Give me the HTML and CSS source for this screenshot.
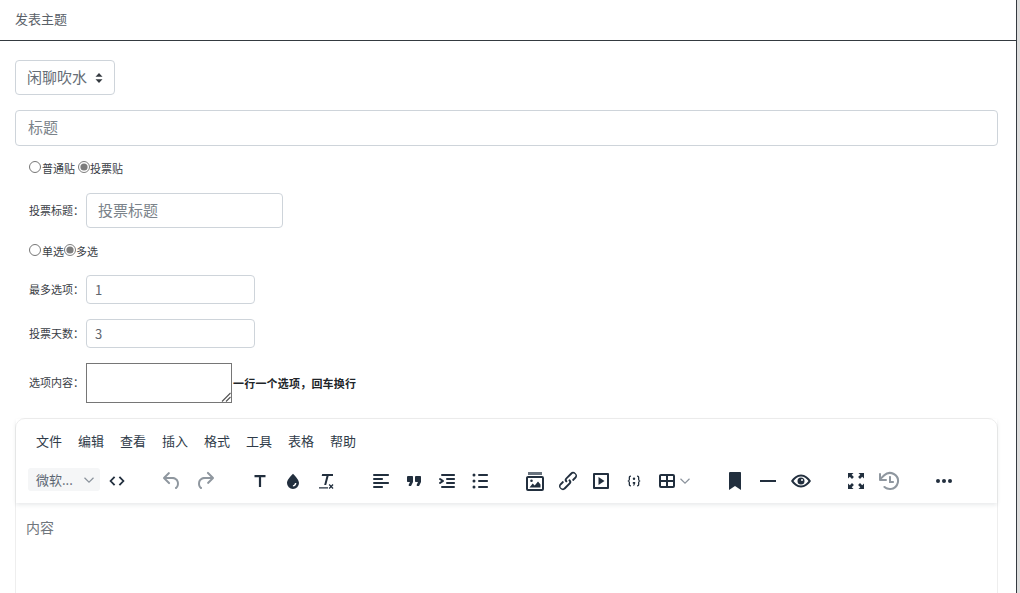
FILE: index.html
```html
<!DOCTYPE html>
<html>
<head>
  <title>发表主题</title>
  <meta charset="UTF-8">
  <link rel="stylesheet" href="styles.css">
</head>
<body>
  <div class="page">
    <div class="card">
      <div class="card-header">发表主题</div>
      <form class="card-body">
        <select class="forum-select">
          <option>闲聊吹水</option>
        </select>
        <input type="text" class="title-input" placeholder="标题">

        <div class="poll">
          <div class="radio-row type-row">
            <input type="radio" name="type"><span>普通贴</span>
            <input type="radio" name="type" class="second" checked><span>投票贴</span>
          </div>
          <div class="field poll-title">
            <label>投票标题：</label>
            <input type="text" class="poll-title-input" placeholder="投票标题">
          </div>
          <div class="radio-row mode-row">
            <input type="radio" name="mode"><span>单选</span>
            <input type="radio" name="mode" checked><span>多选</span>
          </div>
          <div class="field max-field">
            <label>最多选项：</label>
            <input type="text" class="num-input" value="1">
          </div>
          <div class="field">
            <label>投票天数：</label>
            <input type="text" class="num-input" value="3">
          </div>
          <div class="field options">
            <label>选项内容：</label>
            <div class="options-wrap">
              <textarea class="options-input"></textarea>
              <svg class="grip" width="10" height="10" viewBox="0 0 10 10"><path d="M1 9.500 9.500 1M5 9.500 9.500 5" fill="none" stroke="#555" stroke-width="1.100"/></svg>
            </div>
            <b class="hint">一行一个选项，回车换行</b>
          </div>
        </div>

        <div class="editor">
          <div class="editor-head">
            <div class="menubar">
              <span>文件</span><span>编辑</span><span>查看</span><span>插入</span><span>格式</span><span>工具</span><span>表格</span><span>帮助</span>
            </div>
            <div class="toolbar">
              <div class="tool-group first">
                <div class="font-pick">
                  <span>微软...</span>
                  <svg width="10" height="10" viewBox="0 0 10 10"><path d="M.5 2.800 5 7.200l4.500-4.400" fill="none" stroke="#8a929c" stroke-width="1.200"/></svg>
                </div>
                <button type="button" class="tool">
                  <svg width="24" height="24" viewBox="0 0 24 24"><path d="M9.600 7.800 5.600 12l4 4.200M14.400 7.800l4 4.200-4 4.200" fill="none" stroke="#222f3e" stroke-width="1.800"/></svg>
                </button>
              </div>
              <div class="tool-group">
                <button type="button" class="tool off">
                  <svg width="24" height="24" viewBox="0 0 24 24"><path d="M6.400 8H12c3.700 0 6.200 2 6.800 5.100.6 2.700-.4 5.600-2.300 6.800a1 1 0 0 1-1-1.800c1.100-.6 1.800-2.700 1.400-4.600-.5-2.100-2.100-3.500-4.900-3.500H6.400l3.300 3.300a1 1 0 1 1-1.400 1.400l-5-5a1 1 0 0 1 0-1.400l5-5a1 1 0 0 1 1.400 1.400L6.400 8z"/></svg>
                </button>
                <button type="button" class="tool off">
                  <svg width="24" height="24" viewBox="0 0 24 24"><path d="M17.600 10H12c-2.800 0-4.400 1.400-4.900 3.500-.4 2 .3 4 1.400 4.600a1 1 0 1 1-1 1.800c-2-1.200-2.900-4.100-2.300-6.800.6-3 3-5.100 6.800-5.100h5.600l-3.300-3.300a1 1 0 1 1 1.400-1.400l5 5a1 1 0 0 1 0 1.400l-5 5a1 1 0 0 1-1.400-1.400l3.300-3.300z"/></svg>
                </button>
              </div>
              <div class="tool-group">
                <button type="button" class="tool">
                  <svg width="24" height="24" viewBox="0 0 24 24"><path d="M6.500 6h11v2.200h-4.400V18h-2.200V8.200H6.500z"/></svg>
                </button>
                <button type="button" class="tool">
                  <svg width="24" height="24" viewBox="0 0 24 24"><path fill-rule="evenodd" d="M12 4.800c3.400 3.700 6 6.500 6 9.200a6 6 0 0 1-12 0c0-2.700 2.600-5.500 6-9.200zm3.400 9.200h-1.500c0 1.200-.8 2.100-2 2.300v1.300c2.100-.1 3.500-1.700 3.500-3.600z"/></svg>
                </button>
                <button type="button" class="tool">
                  <svg width="24" height="24" viewBox="0 0 24 24"><path d="M8.200 5h10.800v2h-4.400L12.200 16h-2l2.300-9H7.700zM5 18.200h9v1.400H5zM15.600 15.100l1.500 1.500 1.500-1.500.9.9-1.500 1.500 1.500 1.500-.9.9-1.500-1.500-1.500 1.500-.9-.9 1.500-1.500-1.500-1.500z"/></svg>
                </button>
              </div>
              <div class="tool-group">
                <button type="button" class="tool">
                  <svg width="24" height="24" viewBox="0 0 24 24"><path d="M5 5h14c.6 0 1 .4 1 1s-.4 1-1 1H5a1 1 0 1 1 0-2zm0 4h8c.6 0 1 .4 1 1s-.4 1-1 1H5a1 1 0 1 1 0-2zm0 8h8c.6 0 1 .4 1 1s-.4 1-1 1H5a1 1 0 0 1 0-2zm0-4h14c.6 0 1 .4 1 1s-.4 1-1 1H5a1 1 0 0 1 0-2z"/></svg>
                </button>
                <button type="button" class="tool">
                  <svg width="24" height="24" viewBox="0 0 24 24"><path d="M7.500 17h.9c.4 0 .7-.2.9-.6L11 13V8c0-.6-.4-1-1-1H6a1 1 0 0 0-1 1v4c0 .6.4 1 1 1h2l-1.300 2.700a1 1 0 0 0 .8 1.300zm8 0h.9c.4 0 .7-.2.9-.6L19 13V8c0-.6-.4-1-1-1h-4a1 1 0 0 0-1 1v4c0 .6.4 1 1 1h2l-1.300 2.700a1 1 0 0 0 .8 1.300z"/></svg>
                </button>
                <button type="button" class="tool">
                  <svg width="24" height="24" viewBox="0 0 24 24"><path d="M7 5h12c.6 0 1 .4 1 1s-.4 1-1 1H7a1 1 0 1 1 0-2zm5 4h7c.6 0 1 .4 1 1s-.4 1-1 1h-7a1 1 0 0 1 0-2zm0 4h7c.6 0 1 .4 1 1s-.4 1-1 1h-7a1 1 0 0 1 0-2zm-5 4h12a1 1 0 0 1 0 2H7a1 1 0 0 1 0-2zm-2.600-3.800L6.200 12l-1.800-1.200a1 1 0 0 1 1.200-1.600l3 2a1 1 0 0 1 0 1.600l-3 2a1 1 0 1 1-1.200-1.600z"/></svg>
                </button>
                <button type="button" class="tool">
                  <svg width="24" height="24" viewBox="0 0 24 24"><path d="M11 5h8c.6 0 1 .4 1 1s-.4 1-1 1h-8a1 1 0 0 1 0-2zm0 6h8c.6 0 1 .4 1 1s-.4 1-1 1h-8a1 1 0 0 1 0-2zm0 6h8c.6 0 1 .4 1 1s-.4 1-1 1h-8a1 1 0 0 1 0-2z"/><circle cx="6" cy="6" r="1.500"/><circle cx="6" cy="12" r="1.500"/><circle cx="6" cy="18" r="1.500"/></svg>
                </button>
              </div>
              <div class="tool-group">
                <button type="button" class="tool">
                  <svg width="24" height="24" viewBox="0 0 24 24"><path fill-rule="evenodd" d="M5 7h14a2 2 0 0 1 2 2v11a2 2 0 0 1-2 2H5a2 2 0 0 1-2-2V9c0-1.100.9-2 2-2zm0 2v11h14V9z"/><path class="band" d="M5 3h14v3H5z"/><path d="M6.500 18.500l3.200-4 2 2 3.300-4 2.500 3v3zM8.500 10.500a1.300 1.300 0 1 1 0 2.600 1.300 1.300 0 0 1 0-2.600z"/></svg>
                </button>
                <button type="button" class="tool">
                  <svg width="24" height="24" viewBox="0 0 24 24"><path d="M6.200 12.300a1 1 0 0 1 1.400 1.400l-2 2a2 2 0 1 0 2.600 2.800l4.800-4.800a1 1 0 0 0 0-1.400 1 1 0 1 1 1.400-1.300 2.900 2.900 0 0 1 0 4L9.600 20a3.900 3.900 0 0 1-5.500-5.500l2-2zm11.600-.6a1 1 0 0 1-1.400-1.400l2-2a2 2 0 1 0-2.600-2.800L11 10a1 1 0 0 0 0 1.400A1 1 0 1 1 9.600 13a2.900 2.900 0 0 1 0-4L14.400 4a3.900 3.900 0 0 1 5.500 5.500l-2 2z"/></svg>
                </button>
                <button type="button" class="tool">
                  <svg width="24" height="24" viewBox="0 0 24 24"><path fill-rule="evenodd" d="M5 4h14a1 1 0 0 1 1 1v14a1 1 0 0 1-1 1H5a1 1 0 0 1-1-1V5a1 1 0 0 1 1-1zm1 2v12h12V6z"/><path d="M9.500 8l6 4-6 4z"/></svg>
                </button>
                <button type="button" class="tool">
                  <svg width="24" height="24" viewBox="0 0 24 24"><path d="M9 6.500c-1.700 0-2.300.8-2.300 2.200v1.800c0 .7-.3 1.100-1.100 1.300v.4c.8.200 1.100.6 1.100 1.300v1.800c0 1.400.6 2.200 2.300 2.200v-1.200c-.8 0-1-.3-1-1.100v-1.700c0-.8-.4-1.300-1.100-1.500.7-.2 1.100-.7 1.100-1.500V8.800c0-.8.2-1.100 1-1.100zM15 6.500c1.700 0 2.300.8 2.300 2.200v1.800c0 .7.300 1.100 1.100 1.300v.4c-.8.200-1.100.6-1.100 1.300v1.800c0 1.400-.6 2.200-2.300 2.200v-1.200c.8 0 1-.3 1-1.100v-1.700c0-.8.400-1.300 1.100-1.500-.7-.2-1.100-.7-1.100-1.500V8.800c0-.8-.2-1.100-1-1.100z"/><circle cx="12" cy="9.800" r="1.200"/><path d="M10.800 13h2.400v1.600l-1.100 2.100h-.9l.5-1.900h-.9z"/></svg>
                </button>
                <button type="button" class="tool tool-split">
                  <svg width="24" height="24" viewBox="0 0 24 24"><path fill-rule="evenodd" d="M18 5a2 2 0 0 1 2 2v10a2 2 0 0 1-2 2H6a2 2 0 0 1-2-2V7c0-1.100.9-2 2-2h12zM6 7v4h5V7zm7 0v4h5V7zm-7 6v4h5v-4zm7 0v4h5v-4z"/></svg>
                  <svg class="split-arrow" width="10" height="10" viewBox="0 0 10 10"><path d="M.5 2.800 5 7.200l4.500-4.400" fill="none" stroke="#8a929c" stroke-width="1.200"/></svg>
                </button>
              </div>
              <div class="tool-group">
                <button type="button" class="tool">
                  <svg width="24" height="24" viewBox="0 0 24 24"><path d="M6 4v17l6-4 6 4V4c0-.6-.4-1-1-1H7a1 1 0 0 0-1 1z"/></svg>
                </button>
                <button type="button" class="tool">
                  <svg width="24" height="24" viewBox="0 0 24 24"><path d="M4 11h16v2H4z"/></svg>
                </button>
                <button type="button" class="tool">
                  <svg width="24" height="24" viewBox="0 0 24 24"><path fill-rule="evenodd" d="M12 5.500c4.200 0 7.700 3 10 6.500-2.300 3.500-5.800 6.500-10 6.500S4.300 15.500 2 12c2.300-3.500 5.800-6.500 10-6.500zm0 2c-3 0-5.600 2-7.500 4.500 1.900 2.500 4.500 4.500 7.500 4.500s5.600-2 7.500-4.500C17.600 9.500 15 7.500 12 7.500z"/><path fill-rule="evenodd" d="M12 8.500a3.500 3.500 0 1 1 0 7 3.500 3.500 0 0 1 0-7zm1 1.500a1 1 0 1 0 0 2 1 1 0 0 0 0-2z"/></svg>
                </button>
              </div>
              <div class="tool-group">
                <button type="button" class="tool">
                  <svg width="24" height="24" viewBox="0 0 24 24"><path d="M4 4h5.500L7.700 5.800l2.200 2.200-1.900 1.900-2.200-2.200L4 9.500zM20 4v5.500l-1.800-1.800L16 9.900 14.100 8l2.200-2.200L14.500 4zM4 20v-5.500l1.800 1.800L8 14.100 9.900 16l-2.200 2.200L9.500 20zM20 20h-5.500l1.800-1.800-2.200-2.200 1.900-1.900 2.200 2.200 1.800-1.800z"/></svg>
                </button>
                <button type="button" class="tool off">
                  <svg width="24" height="24" viewBox="0 0 24 24"><path d="M17 13c0 .6-.4 1-1 1h-4V8c0-.6.4-1 1-1s1 .4 1 1v4h2c.6 0 1 .4 1 1z"/><path d="M4.700 10H9a1 1 0 0 1 0 2H3a1 1 0 0 1-1-1V5a1 1 0 1 1 2 0v3l2.500-2.400a9.200 9.200 0 0 1 10.800-1.500A9 9 0 0 1 13.400 21c-2.400.1-4.700-.7-6.500-2.200a1 1 0 1 1 1.300-1.500 7.200 7.200 0 0 0 11.600-3.700 7 7 0 0 0-3.500-7.700A7.200 7.200 0 0 0 8 7L4.700 10z"/></svg>
                </button>
              </div>
              <div class="tool-group">
                <button type="button" class="tool">
                  <svg width="24" height="24" viewBox="0 0 24 24"><circle cx="6" cy="12" r="2"/><circle cx="12" cy="12" r="2"/><circle cx="18" cy="12" r="2"/></svg>
                </button>
              </div>
            </div>
          </div>
          <div class="editor-content">内容</div>
        </div>
      </form>
    </div>
    <div class="rail"></div>
  </div>
</body>
</html>
```

FILE: styles.css
```css
html, body {
  margin: 0;
  padding: 0;
  height: 100%;
  overflow: hidden;
}
body {
  font-family: "Noto Sans CJK SC", "Liberation Sans", sans-serif;
  color: #212529;
  background-color: #fff;
}
.page {
  display: flex;
  height: 593px;
  overflow: hidden;
}
.card {
  flex: 1;
  min-width: 0;
  border-right: 1px solid #343a40;
}
.rail {
  width: 3px;
  background-color: #ddd;
}
.card-header {
  height: 40px;
  line-height: 38px;
  padding: 0 15px;
  font-size: 13px;
  color: #5a6168;
  border-bottom: 1px solid #343a40;
}
.card-body {
  padding: 19px 18px 0 15px;
}
input, select, textarea {
  font-family: inherit;
  box-sizing: border-box;
  outline: none;
}
input[type="text"], select {
  display: block;
  color: #5f666d;
  background-color: #fff;
  border: 1px solid #ced4da;
  border-radius: 4px;
}
input::placeholder {
  color: #7b838a;
  opacity: 1;
}
.forum-select {
  width: 100px;
  height: 35px;
  padding: 0 12px 2px 11px;
  font-size: 15px;
  color: #666d75;
  appearance: none;
  background-image: url("data:image/svg+xml,%3csvg xmlns='http://www.w3.org/2000/svg' width='8' height='10' viewBox='0 0 8 10'%3e%3cpath fill='%23343a40' d='M4 0 .5 3.800h7zM4 10 .5 6.200h7z'/%3e%3c/svg%3e");
  background-repeat: no-repeat;
  background-position: right 11px top 12px;
}
.title-input {
  width: 100%;
  height: 36px;
  margin-top: 15px;
  padding: 0 12px 3px;
  font-size: 15px;
}
.poll {
  padding-left: 14px;
  font-size: 11px;
  color: #3a4046;
}
.radio-row {
  display: flex;
  align-items: center;
  height: 16px;
}
.radio-row input {
  width: 12px;
  height: 12px;
  margin: 0 1px 3px 0;
  accent-color: #7d7d7d;
}
.radio-row input[checked] {
  margin-right: 0;
}
.radio-row .second {
  margin-left: 3px;
}
.type-row {
  margin-top: 14px;
}
.mode-row {
  margin-top: 15px;
}
.field {
  display: flex;
  align-items: center;
  margin-top: 15px;
}
.max-field {
  margin-top: 16px;
}
.field label {
  width: 57px;
  flex-shrink: 0;
  margin-top: -2px;
}
.poll-title {
  margin-top: 17px;
}
.poll-title-input {
  width: 197px;
  height: 35px;
  padding: 0 11px 2px;
  font-size: 15px;
}
.num-input {
  width: 169px;
  height: 29px;
  padding: 0 8px;
  font-size: 13px;
}
.options-wrap {
  position: relative;
  display: flex;
}
.options-input {
  width: 146px;
  height: 40px;
  margin: 0;
  border: 1px solid #767676;
  border-radius: 0;
  resize: none;
}
.grip {
  position: absolute;
  right: 1px;
  bottom: 1px;
}
.hint {
  margin-left: 1px;
  margin-top: -1px;
  font-size: 11px;
  letter-spacing: .2px;
  color: #212529;
}
.editor {
  margin-top: 15px;
  height: 300px;
  border: 1px solid #eee;
  border-radius: 10px;
}
.editor-head {
  box-shadow: 0 2px 4px rgba(34, 47, 62, 0.1);
}
.menubar {
  display: flex;
  height: 43px;
  align-items: center;
  padding-left: 20px;
  font-size: 13px;
  color: #2f3b49;
}
.menubar span {
  width: 42px;
}
.toolbar {
  display: flex;
  box-sizing: border-box;
  height: 41px;
  padding: 2px 0 0 12px;
}
.tool-group {
  display: flex;
  margin-right: 22px;
}
.font-pick {
  display: flex;
  align-items: center;
  justify-content: space-between;
  box-sizing: border-box;
  width: 72px;
  height: 23px;
  margin-top: 4px;
  padding: 0 6px 0 8px;
  font-size: 13px;
  color: #5a6571;
  background-color: #f5f6f7;
  border-radius: 3px;
}
.tool {
  display: flex;
  align-items: center;
  justify-content: center;
  width: 33px;
  height: 34px;
  padding: 0;
  border: none;
  background: none;
  fill: #222f3e;
}
.tool.off {
  fill: #8f979f;
}
.tool .band {
  fill: #68727d;
}
.tool-split {
  width: 46px;
  justify-content: flex-start;
  padding-left: 5px;
}
.tool-split .split-arrow {
  margin-left: 1px;
}
.editor-content {
  padding: 14px 10px;
  font-size: 14px;
  color: #70767d;
}
```
